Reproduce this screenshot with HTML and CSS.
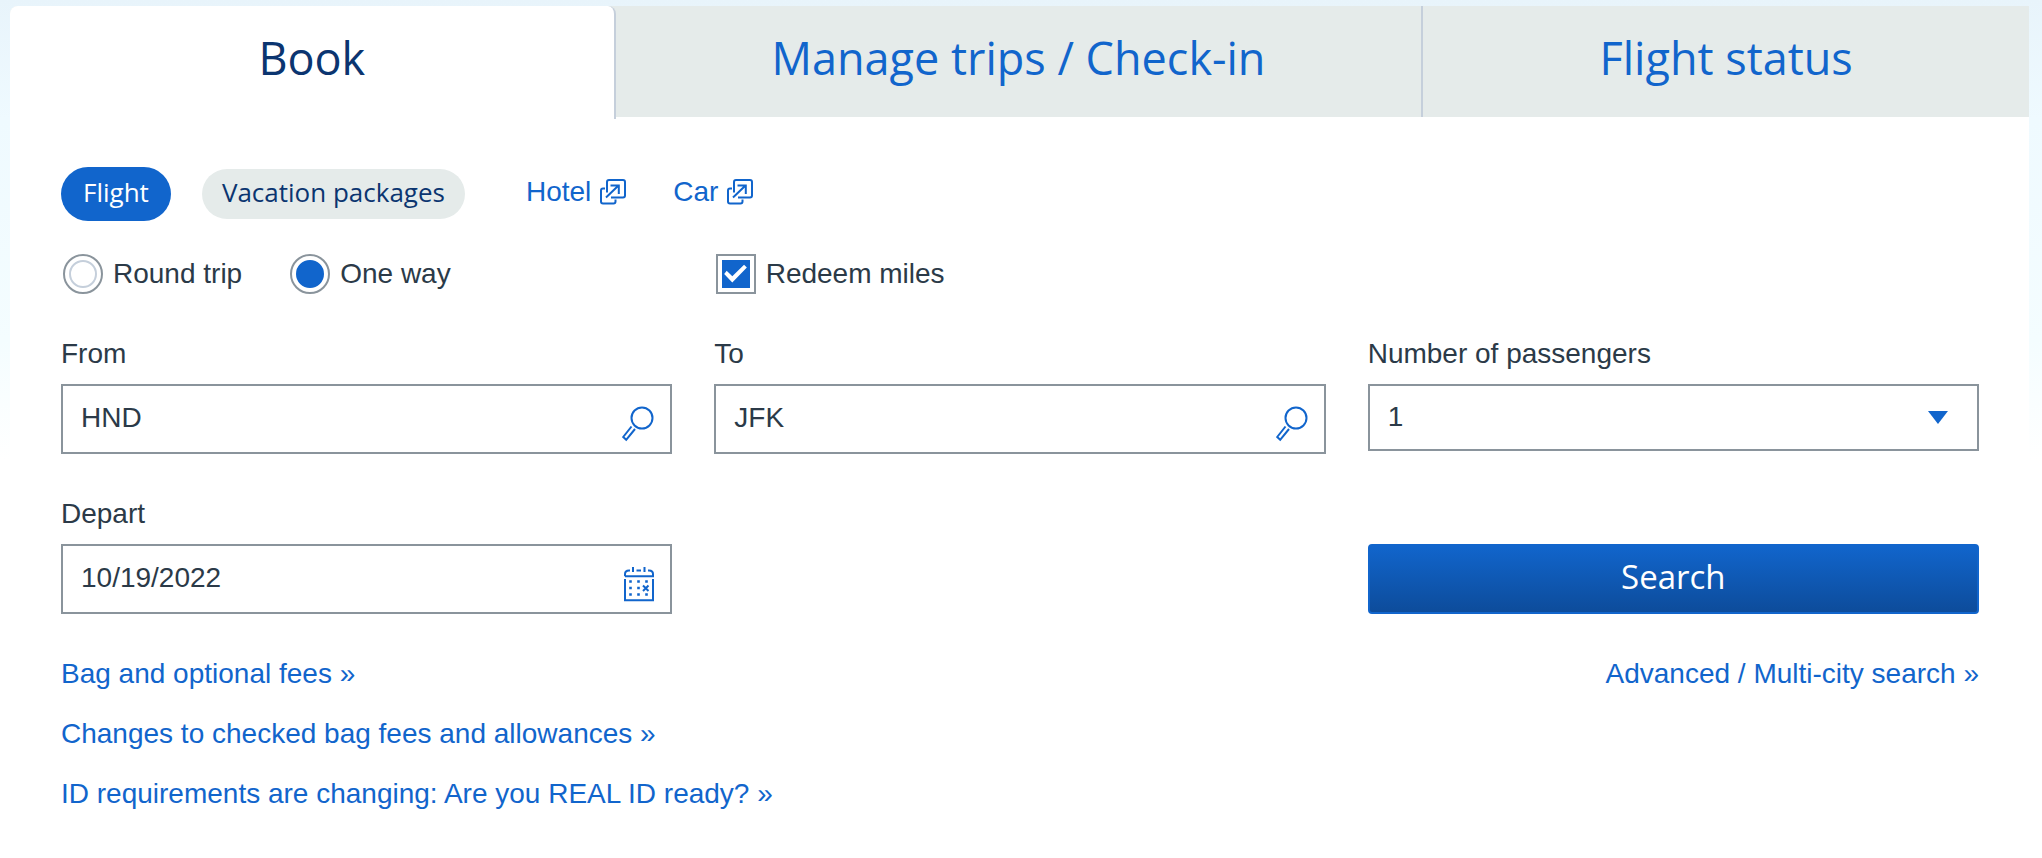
FILE: index.html
```html
<!DOCTYPE html>
<html lang="en">

<head>
    <meta charset="UTF-8">
    <meta name="viewport" content="width=device-width, initial-scale=1.0">
    <title>Book flights</title>
    <link rel="stylesheet" href="styles.css">
</head>

<body>

    <!-- shared icons -->
    <svg class="sprite" aria-hidden="true">
        <symbol id="icon-external" viewBox="0 0 26 26">
            <path d="M7 13.500V3Q7 1 9 1H23Q25 1 25 3V16.500Q25 18.500 23 18.500H11" />
            <path d="M5 9.500H3Q1 9.500 1 11.500V22.500Q1 24.500 3 24.500H13.500Q15.500 24.500 15.500 22.500V20.500" />
            <path d="M6 18.500L18.500 6.500M10.500 6.500H18.800V15" />
        </symbol>
        <symbol id="icon-search" viewBox="0 0 32 36">
            <circle cx="20" cy="12" r="10.500" />
            <path d="M9.500 20.500L1.200 31L4.200 33.800L13 23" />
        </symbol>
        <symbol id="icon-calendar" viewBox="0 0 30 35">
            <path d="M1 9.200V7Q1 3.500 5 3.500H6M1 9.200H29V7Q29 3.500 25 3.500H24M9 0V5M20.500 0V5M12.500 3.500H17" />
            <path d="M1 12V33.300H29V12" />
            <path stroke-width="2.600"
                d="M5.200 14.500H7.800M13.200 14.500H15.800M21.200 14.500H23.800M5.200 21H7.800M13.200 21H15.800M5.200 27.500H7.800M13.200 27.500H15.800M21.200 27.500H23.800" />
            <path d="M19 18.500L24.500 24M24.500 18.500L19 24" />
        </symbol>
    </svg>

    <main class="panel">

        <nav class="tabs">
            <a class="tab active" href="#book">Book</a>
            <a class="tab" href="#trips">Manage trips / Check-in</a>
            <a class="tab" href="#status">Flight status</a>
        </nav>

        <form class="booking" id="book">

            <!-- product type -->
            <div class="products">
                <button type="button" class="pill selected">Flight</button>
                <button type="button" class="pill">Vacation packages</button>
                <a class="external" href="#hotel">Hotel <svg class="icon-external"><use href="#icon-external" /></svg></a>
                <a class="external" href="#car">Car <svg class="icon-external"><use href="#icon-external" /></svg></a>
            </div>

            <!-- trip options -->
            <div class="columns options">
                <div class="trip-type">
                    <label class="choice"><input type="radio" name="trip" value="round">Round trip</label>
                    <label class="choice"><input type="radio" name="trip" value="oneway" checked>One way</label>
                </div>
                <label class="choice"><input type="checkbox" name="miles" checked>Redeem miles</label>
            </div>

            <div class="columns">
                <div class="field">
                    <label for="from">From</label>
                    <div class="control">
                        <input type="text" id="from" value="HND">
                        <button type="button" class="icon-btn" aria-label="Look up departure airport">
                            <svg class="icon-search"><use href="#icon-search" /></svg>
                        </button>
                    </div>
                </div>

                <div class="field">
                    <label for="to">To</label>
                    <div class="control">
                        <input type="text" id="to" value="JFK">
                        <button type="button" class="icon-btn" aria-label="Look up arrival airport">
                            <svg class="icon-search"><use href="#icon-search" /></svg>
                        </button>
                    </div>
                </div>

                <div class="field">
                    <label for="passengers">Number of passengers</label>
                    <div class="control select">
                        <select id="passengers">
                            <option>1</option>
                            <option>2</option>
                            <option>3</option>
                            <option>4</option>
                            <option>5</option>
                            <option>6</option>
                        </select>
                    </div>
                </div>
            </div>

            <div class="columns">
                <div class="field">
                    <label for="depart">Depart</label>
                    <div class="control">
                        <input type="text" id="depart" value="10/19/2022">
                        <button type="button" class="icon-btn" aria-label="Open calendar">
                            <svg class="icon-calendar"><use href="#icon-calendar" /></svg>
                        </button>
                    </div>
                </div>
                <button type="submit" class="search">Search</button>
            </div>

            <div class="links">
                <ul>
                    <li><a href="#bags">Bag and optional fees »</a></li>
                    <li><a href="#changes">Changes to checked bag fees and allowances »</a></li>
                    <li><a href="#real-id">ID requirements are changing: Are you REAL ID ready? »</a></li>
                </ul>
                <a href="#advanced">Advanced / Multi-city search »</a>
            </div>

        </form>
    </main>

</body>

</html>
```
FILE: styles.css
```css
*,
*::before,
*::after {
    box-sizing: border-box;
}

body {
    margin: 0;
    padding: 6px 13px 0 10px;
    background: linear-gradient(#e8f4fb, #effaff 120px, #f4fdff 340px, #ffffff 460px) no-repeat;
    font-family: "Liberation Sans", Arial, sans-serif;
    font-size: 28px;
    line-height: 32px;
    color: #2b3a48;
}

a {
    color: #1165cc;
    text-decoration: none;
}

button,
input,
select {
    font: inherit;
    color: inherit;
    margin: 0;
}

svg {
    fill: none;
    stroke: #1165cc;
    stroke-width: 2px;
}

.sprite {
    position: absolute;
    width: 0;
    height: 0;
}

.panel {
    background-color: #ffffff;
    border-radius: 8px 8px 0 0;
}

/* tabs */

.tabs {
    display: grid;
    grid-template-columns: 3fr 4fr 3fr;
    border-radius: 8px 0 0 0;
    background-color: #e5ebea;
    height: 111px;
}

.tab {
    height: 111px;
    padding-top: 20px;
    border-right: 2px solid #c5cfdb;
    font-family: "Open Sans", sans-serif;
    font-size: 45px;
    line-height: 64px;
    text-align: center;
}

.tab:last-child {
    border-right: 0;
}

.tab.active {
    height: 113px;
    background-color: #ffffff;
    border-radius: 8px 8px 0 0;
    color: #0b3570;
}

/* booking form */

.booking {
    display: flex;
    flex-direction: column;
    gap: 44px;
    padding: 50px 50px 40px 51px;
}

.products {
    display: flex;
    align-items: center;
    height: 54px;
}

.pill {
    height: 50px;
    padding: 0 20px 4px;
    border: 0;
    border-radius: 27px;
    background-color: #e5ebea;
    color: #0b3570;
    font-family: "Open Sans", sans-serif;
    font-size: 26px;
}

.pill.selected {
    height: 54px;
    padding: 0 22px 4px;
    margin-right: 31px;
    background-color: #1165cc;
    color: #ffffff;
}

.external {
    display: flex;
    align-items: center;
    gap: 9px;
    margin-left: 47px;
    padding-bottom: 4px;
}

.pill + .external {
    margin-left: 61px;
}

.icon-external {
    width: 26px;
    height: 26px;
}

.columns {
    display: grid;
    grid-template-columns: repeat(3, 1fr);
    column-gap: 42px;
    align-items: start;
}

.options {
    margin-top: -11px;
    padding-left: 2px;
}

.trip-type {
    display: flex;
    gap: 48px;
}

.choice {
    display: flex;
    align-items: center;
    gap: 10px;
}

.choice input {
    appearance: none;
    display: grid;
    place-items: center;
    width: 40px;
    height: 40px;
    border: 2px solid #8a949c;
    background-color: #ffffff;
}

.choice input::before {
    content: "";
    width: 28px;
    height: 28px;
    border: 2px solid #c5cfdb;
    grid-area: 1 / 1;
}

.choice input[type="radio"],
.choice input[type="radio"]::before {
    border-radius: 50%;
}

.choice input:checked::before {
    border-color: #1165cc;
    background-color: #1165cc;
}

.choice input[type="checkbox"]:checked::after {
    content: "";
    grid-area: 1 / 1;
    width: 28px;
    height: 28px;
    background-color: #ffffff;
    clip-path: polygon(9% 50%, 18% 38%, 38% 58%, 80% 17%, 90% 27%, 38% 80%);
}

.field {
    display: flex;
    flex-direction: column;
    gap: 14px;
}

.control {
    position: relative;
}

.control input,
.control select {
    display: block;
    width: 100%;
    height: 70px;
    padding: 0 80px 2px 18px;
    border: 2px solid #8a949c;
    border-radius: 0;
    background-color: #ffffff;
}

.control select {
    appearance: none;
    height: 67px;
}

.select::after {
    content: "";
    position: absolute;
    top: 27px;
    right: 31px;
    width: 20px;
    height: 13px;
    background-color: #1165cc;
    clip-path: polygon(0 0, 100% 0, 50% 100%);
    pointer-events: none;
}

.icon-btn {
    position: absolute;
    top: 22px;
    right: 18px;
    height: 36px;
    padding: 0;
    border: 0;
    background: none;
}

.icon-btn svg {
    display: block;
}

.icon-search {
    width: 32px;
    height: 36px;
}

.icon-calendar {
    width: 30px;
    height: 35px;
}

.search {
    grid-column: 3;
    align-self: end;
    height: 70px;
    padding: 0 0 4px;
    border: 2px solid #1165cc;
    border-radius: 4px;
    background: linear-gradient(#1165cc, #0d4c9b);
    color: #ffffff;
    font-family: "Open Sans", sans-serif;
    font-size: 33px;
}

.links {
    display: flex;
    justify-content: space-between;
    align-items: flex-start;
}

.links ul {
    display: flex;
    flex-direction: column;
    gap: 28px;
    margin: 0;
    padding: 0;
    list-style: none;
}
```
